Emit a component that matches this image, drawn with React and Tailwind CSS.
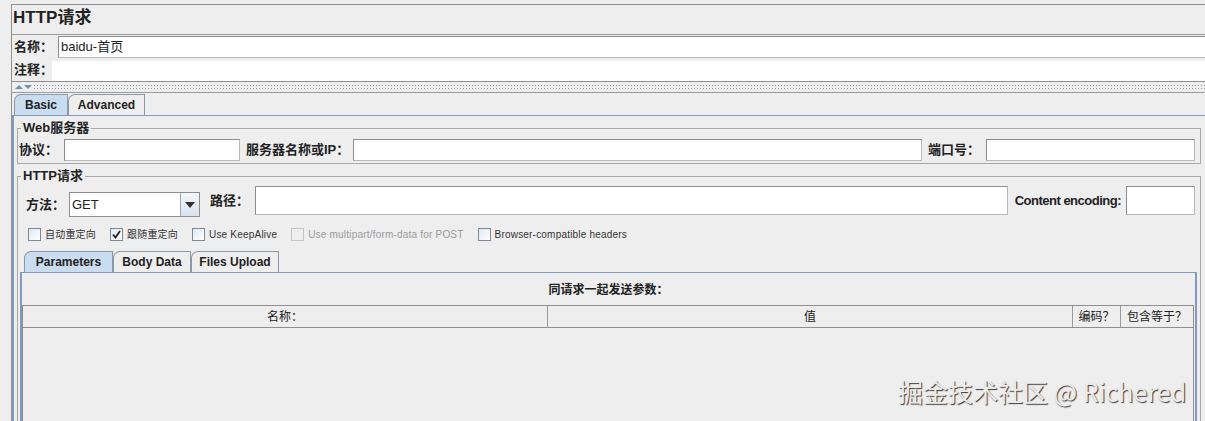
import { useState } from "react";

function Field({ className = "", children }) {
  return (
    <div
      className={`h-[22px] bg-white border border-[#8d8d8d] border-b-[#b8b8b8] border-r-[#b8b8b8] flex items-center pl-[2px] text-[13px] ${className}`}
    >
      {children}
    </div>
  );
}

function Label({ className = "", children }) {
  return <div className={`shrink-0 whitespace-nowrap text-[13px] font-bold ${className}`}>{children}</div>;
}

function Check({ label, checked, disabled }) {
  return (
    <div className="flex items-center gap-[4px] whitespace-nowrap">
      <div
        className={`w-[13px] h-[13px] border flex items-center justify-center ${
          disabled
            ? "border-[#c4c4c4] bg-[#eeeeee]"
            : "border-[#7a8a99] bg-gradient-to-br from-[#dfe8f2] to-white"
        }`}
      >
        {checked && (
          <svg width="9" height="9" viewBox="0 0 9 9">
            <path d="M1 4.5 L3.5 7.5 L8 1" stroke="#222" strokeWidth="1.8" fill="none" />
          </svg>
        )}
      </div>
      <span className={`text-[10px] tracking-[0.2px] ${disabled ? "text-[#9a9a9a]" : "text-[#333]"}`}>{label}</span>
    </div>
  );
}

function Tab({ label, active, className = "" }) {
  return (
    <div
      className={`h-full flex items-center justify-center border border-b-0 border-[#8c98a6] rounded-tl-[7px] text-[12px] font-bold whitespace-nowrap ${
        active ? "bg-[#c9dcf0]" : "bg-[#eeeeee]"
      } ${className}`}
    >
      {label}
    </div>
  );
}

export default function App() {
  const [method] = useState("GET");

  return (
    <div className="relative w-[1205px] h-[421px] overflow-hidden bg-[#eeeeee] text-[#222] font-['Liberation_Sans','Noto_Sans_CJK_SC',sans-serif]">
      {/* top header */}
      <div className="ml-[11px] mt-[4px] border-l border-t border-[#8f8f8f]">
        <div className="h-[29px] pl-[1px] pt-[3px] text-[17px] font-bold leading-[20px]">HTTP请求</div>
        <div className="border-t border-[#9a9a9a]">
          <div className="h-[24px] flex items-center">
            <Label className="w-[46px] pl-[2px]">名称：</Label>
            <Field className="flex-1 h-[21px] border-r-0">baidu-首页</Field>
          </div>
          <div className="h-[23px] flex items-center border-b border-[#8f8f8f]">
            <Label className="w-[40px] pl-[2px]">注释：</Label>
            <div className="flex-1 h-[20px] self-end bg-white" />
          </div>
        </div>
      </div>

      {/* splitter */}
      <div className="ml-[11px] h-[11px] border-l border-b border-[#9a9a9a] flex items-center">
        <svg width="18" height="6" viewBox="0 0 18 6" className="ml-[3px] shrink-0">
          <path d="M0 5 L4 1 L8 5 Z" fill="#6f8fb5" />
          <path d="M9 1 L17 1 L13 5 Z" fill="#6f8fb5" />
        </svg>
        <div className="flex-1 h-[6px] bg-[radial-gradient(#9c9c9c_0.6px,transparent_0.9px)] bg-[length:3px_3px]" />
      </div>

      {/* main tabs */}
      <div className="ml-[11px] border-l border-[#8f8f8f] h-full">
        <div className="h-[22px] pt-[1px] flex pl-[2px]">
          <Tab label="Basic" active className="w-[54px]" />
          <Tab label="Advanced" className="w-[77px]" />
        </div>
        <div className="border-t border-l-2 border-[#7f9cc0] h-full pt-[5px]">
          {/* Web server */}
          <fieldset className="ml-[3px] mr-[4px] border border-[#a8a8a8] px-[1px] pb-[2px]">
            <legend className="ml-[2px] px-[2px] text-[13px] leading-[14px] font-bold">Web服务器</legend>
            <div className="flex items-center h-[22px] mt-[4px]">
              <Label className="w-[45px]">协议：</Label>
              <Field className="w-[176px]" />
              <Label className="w-[113px] pl-[6px]">服务器名称或IP：</Label>
              <Field className="flex-1" />
              <Label className="w-[64px] pl-[6px]">端口号：</Label>
              <Field className="w-[209px] mr-[4px]" />
            </div>
          </fieldset>

          {/* HTTP request */}
          <fieldset className="ml-[3px] mr-[4px] mt-[5px] border border-[#a8a8a8] border-b-0 px-[1px] h-[260px]">
            <legend className="ml-[2px] px-[2px] text-[13px] leading-[14px] font-bold">HTTP请求</legend>
            <div className="flex items-center h-[29px] mt-[3px]">
              <Label className="w-[50px] pl-[7px] self-end mb-[1px]">方法：</Label>
              <div className="w-[131px] h-[25px] self-end mb-[-2px] bg-white border border-[#8d8d8d] flex">
                <div className="flex-1 pl-[2px] text-[13px] flex items-center">{method}</div>
                <div className="w-[19px] border-l border-[#9aa6b3] bg-gradient-to-b from-[#f4f7fb] to-[#d9e3ee] flex items-center justify-center">
                  <svg width="10" height="6" viewBox="0 0 10 6">
                    <path d="M0 0 L10 0 L5 6 Z" fill="#333" />
                  </svg>
                </div>
              </div>
              <Label className="w-[55px] pl-[10px]">路径：</Label>
              <Field className="flex-1 h-[29px]" />
              <Label className="pl-[7px] pr-[5px] text-[11.5px] tracking-[-0.5px]">Content encoding:</Label>
              <Field className="w-[69px] h-[29px] mr-[4px]" />
            </div>
            <div className="flex items-center gap-[14px] pl-[9px] mt-[12px] h-[14px]">
              <Check label="自动重定向" />
              <Check label="跟随重定向" checked />
              <Check label="Use KeepAlive" />
              <Check label="Use multipart/form-data for POST" disabled />
              <Check label="Browser-compatible headers" />
            </div>

            {/* inner tabs */}
            <div className="mt-[10px] ml-[1px] mr-[2px]">
              <div className="h-[21px] flex pl-[4px]">
                <Tab label="Parameters" active className="w-[89px]" />
                <Tab label="Body Data" className="w-[78px]" />
                <Tab label="Files Upload" className="w-[88px]" />
              </div>
              <div className="border-t border-l-2 border-r-2 border-[#7f9cc0] h-[160px]">
                <div className="h-[32px] pt-[2px] flex items-center justify-center text-[12px] font-bold">同请求一起发送参数：</div>
                <div className="mr-[1px] border-l border-t border-r border-[#8f8f8f] h-[120px]">
                  <div className="flex h-[22px] border-b border-[#8f8f8f] text-[12px]">
                    <div className="w-[525px] flex items-center justify-center border-r border-[#9a9a9a]">名称：</div>
                    <div className="w-[525px] flex items-center justify-center border-r border-[#9a9a9a]">值</div>
                    <div className="w-[48px] flex items-center justify-center border-r border-[#9a9a9a]">编码？</div>
                    <div className="flex-1 flex items-center justify-center">包含等于？</div>
                  </div>
                </div>
              </div>
            </div>
          </fieldset>
        </div>
      </div>

      {/* watermark */}
      <div className="absolute left-[898px] top-[373px] whitespace-nowrap text-[25px] text-[#ececec] font-['Noto_Sans_CJK_SC',sans-serif] [text-shadow:1px_1px_1px_#3a3a3a]">
        掘金技术社区 @ Richered
      </div>
    </div>
  );
}
